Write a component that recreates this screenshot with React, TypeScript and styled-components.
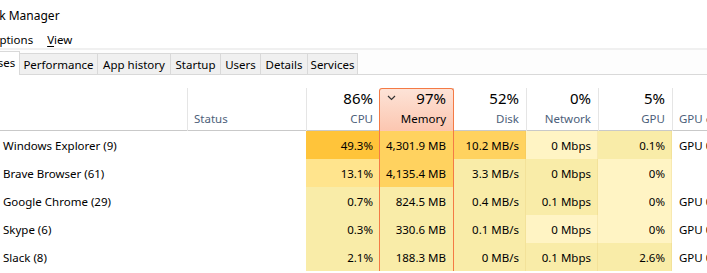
import React from "react";
import styled, { createGlobalStyle, css } from "styled-components";

const GlobalStyle = createGlobalStyle`
  html, body { margin: 0; padding: 0; background: #fff; overflow: hidden; }
  body { font-family: "Noto Sans", "Open Sans", sans-serif; font-size: 11.5px; color: #000; }
`;

const SHIFT = 60;

const Window = styled.div`
  width: ${707 + SHIFT}px;
  height: 273px;
  margin-left: -${SHIFT}px;
  overflow: hidden;
  background: #fff;
  display: flex;
  flex-direction: column;
`;

const TitleBar = styled.div`
  height: 30px;
  display: flex;
  align-items: center;
  padding-left: ${SHIFT - 19}px;
  font-size: 12px;
`;

const MenuBar = styled.div`
  height: 18px;
  display: flex;
  align-items: center;
  padding-left: ${SHIFT - 48}px;
  border-bottom: 2px solid #f0f0f0;
`;

const MenuItem = styled.span`
  padding: 0 6px;
  margin-right: 2px;
`;

const Accel = styled.span`
  text-decoration: underline;
  text-underline-offset: 2px;
`;

const TabStrip = styled.div`
  height: 24px;
  display: flex;
  align-items: flex-end;
  padding-left: ${SHIFT - 42}px;
  border-bottom: 1px solid #d9d9d9;
  background: #fdfdfd;
`;

const Tab = styled.div<{ $w: number; $active?: boolean }>`
  box-sizing: border-box;
  width: ${(p) => p.$w}px;
  height: 21px;
  display: flex;
  align-items: center;
  justify-content: center;
  background: #f0f0f0;
  border: 1px solid #d9d9d9;
  border-bottom: none;
  margin-left: -1px;
  white-space: nowrap;
  ${(p) =>
    p.$active &&
    css`
      background: #fff;
      height: 24px;
      margin-bottom: -1px;
      padding-bottom: 2px;
      position: relative;
      z-index: 1;
    `}
`;

const COLS = `${187 + SHIFT}px 119px 74px 73px 73px 72px 74px 1fr`;

const HeaderRow = styled.div`
  display: grid;
  grid-template-columns: ${COLS};
  height: 56px;
  border-bottom: 1px solid #c9c9c9;
  box-sizing: border-box;
`;

const HeadCell = styled.div<{ $sorted?: boolean; $left?: boolean; $first?: boolean }>`
  margin-top: 13px;
  position: relative;
  display: flex;
  flex-direction: column;
  align-items: ${(p) => (p.$left ? "flex-start" : "flex-end")};
  justify-content: flex-end;
  padding: 0 7px 4px 6px;
  border-left: ${(p) => (p.$first ? "none" : "1px solid #e5e5e5")};
  ${(p) =>
    p.$sorted &&
    css`
      border: 1px solid #f47a45;
      border-bottom: none;
      border-radius: 3px 3px 0 0;
      background: linear-gradient(#fde3d7, #fcc6b0);
      margin-left: -1px;
      margin-right: -1px;
      padding-right: 7px;
      z-index: 1;
    `}
`;

const Pct = styled.div`
  font-size: 15px;
  line-height: 18px;
`;

const Label = styled.div<{ $dark?: boolean }>`
  font-size: 11.5px;
  color: ${(p) => (p.$dark ? "#000" : "#4c607a")};
  line-height: 16px;
  margin-top: 4px;
  white-space: nowrap;
`;

const SortArrow = styled.svg`
  position: absolute;
  left: 7px;
  top: 6px;
`;

const Body = styled.div`
  display: flex;
  flex-direction: column;
`;

const Row = styled.div`
  display: grid;
  grid-template-columns: ${COLS};
  height: 28px;
`;

const NameCell = styled.div`
  display: flex;
  align-items: center;
  padding-left: ${SHIFT + 3}px;
  white-space: nowrap;
`;

const PLAIN = "#ffffff";
const heat = ["#fff4c4", "#f9eca8", "#ffe48d", "#ffd25f", "#ffc43a"];

const Cell = styled.div<{ $lvl?: number; $mem?: boolean }>`
  display: flex;
  align-items: center;
  justify-content: flex-end;
  padding-right: 7px;
  white-space: nowrap;
  background: ${(p) => (p.$lvl === undefined ? PLAIN : heat[p.$lvl])};
  box-shadow: ${(p) => (p.$lvl === undefined ? "none" : "inset -1px 0 0 rgba(215, 185, 90, 0.18)")};
  ${(p) =>
    p.$mem &&
    css`
      border-left: 1px solid #f47a45;
      border-right: 1px solid #f47a45;
      margin-left: -1px;
      margin-right: -1px;
      box-shadow: none;
      position: relative;
      z-index: 1;
    `}
`;

const EngineCell = styled.div`
  display: flex;
  align-items: center;
  padding-left: 7px;
  white-space: nowrap;
`;

type Proc = {
  name: string;
  status: string;
  cpu: [string, number];
  mem: [string, number];
  disk: [string, number];
  net: [string, number];
  gpu: [string, number];
  engine: string;
};

const rows: Proc[] = [
  { name: "Windows Explorer (9)", status: "", cpu: ["49.3%", 4], mem: ["4,301.9 MB", 3], disk: ["10.2 MB/s", 3], net: ["0 Mbps", 0], gpu: ["0.1%", 1], engine: "GPU 0 - 3D" },
  { name: "Brave Browser (61)", status: "", cpu: ["13.1%", 2], mem: ["4,135.4 MB", 3], disk: ["3.3 MB/s", 1], net: ["0 Mbps", 1], gpu: ["0%", 0], engine: "" },
  { name: "Google Chrome (29)", status: "", cpu: ["0.7%", 1], mem: ["824.5 MB", 1], disk: ["0.4 MB/s", 1], net: ["0.1 Mbps", 1], gpu: ["0%", 0], engine: "GPU 0 - 3D" },
  { name: "Skype (6)", status: "", cpu: ["0.3%", 1], mem: ["330.6 MB", 1], disk: ["0.1 MB/s", 1], net: ["0 Mbps", 0], gpu: ["0%", 0], engine: "GPU 0 - 3D" },
  { name: "Slack (8)", status: "", cpu: ["2.1%", 1], mem: ["188.3 MB", 1], disk: ["0 MB/s", 1], net: ["0.1 Mbps", 1], gpu: ["2.6%", 1], engine: "GPU 0 - 3D" },
];

const tabs: { label: string; w: number; active?: boolean }[] = [
  { label: "Processes", w: 63, active: true },
  { label: "Performance", w: 79 },
  { label: "App history", w: 74 },
  { label: "Startup", w: 51 },
  { label: "Users", w: 41 },
  { label: "Details", w: 48 },
  { label: "Services", w: 51 },
];

export default function App() {
  return (
    <>
      <GlobalStyle />
      <Window>
        <TitleBar>Task Manager</TitleBar>
        <MenuBar>
          <MenuItem><Accel>F</Accel>ile</MenuItem>
          <MenuItem><Accel>O</Accel>ptions</MenuItem>
          <MenuItem><Accel>V</Accel>iew</MenuItem>
        </MenuBar>
        <TabStrip>
          {tabs.map((t) => (
            <Tab key={t.label} $w={t.w} $active={t.active}>
              {t.label}
            </Tab>
          ))}
        </TabStrip>
        <HeaderRow>
          <HeadCell $first $left>
            <Label>Name</Label>
          </HeadCell>
          <HeadCell $left>
            <Label>Status</Label>
          </HeadCell>
          <HeadCell>
            <Pct>86%</Pct>
            <Label>CPU</Label>
          </HeadCell>
          <HeadCell $sorted>
            <SortArrow width="9" height="6" viewBox="0 0 9 6">
              <polyline points="1,1 4.5,4.5 8,1" fill="none" stroke="#333" strokeWidth="1.2" />
            </SortArrow>
            <Pct>97%</Pct>
            <Label $dark>Memory</Label>
          </HeadCell>
          <HeadCell>
            <Pct>52%</Pct>
            <Label>Disk</Label>
          </HeadCell>
          <HeadCell>
            <Pct>0%</Pct>
            <Label>Network</Label>
          </HeadCell>
          <HeadCell>
            <Pct>5%</Pct>
            <Label>GPU</Label>
          </HeadCell>
          <HeadCell $left>
            <Label>GPU engine</Label>
          </HeadCell>
        </HeaderRow>
        <Body>
          {rows.map((r) => (
            <Row key={r.name}>
              <NameCell>{r.name}</NameCell>
              <Cell>{r.status}</Cell>
              <Cell $lvl={r.cpu[1]}>{r.cpu[0]}</Cell>
              <Cell $lvl={r.mem[1]} $mem>{r.mem[0]}</Cell>
              <Cell $lvl={r.disk[1]}>{r.disk[0]}</Cell>
              <Cell $lvl={r.net[1]}>{r.net[0]}</Cell>
              <Cell $lvl={r.gpu[1]}>{r.gpu[0]}</Cell>
              <EngineCell>{r.engine}</EngineCell>
            </Row>
          ))}
        </Body>
      </Window>
    </>
  );
}
